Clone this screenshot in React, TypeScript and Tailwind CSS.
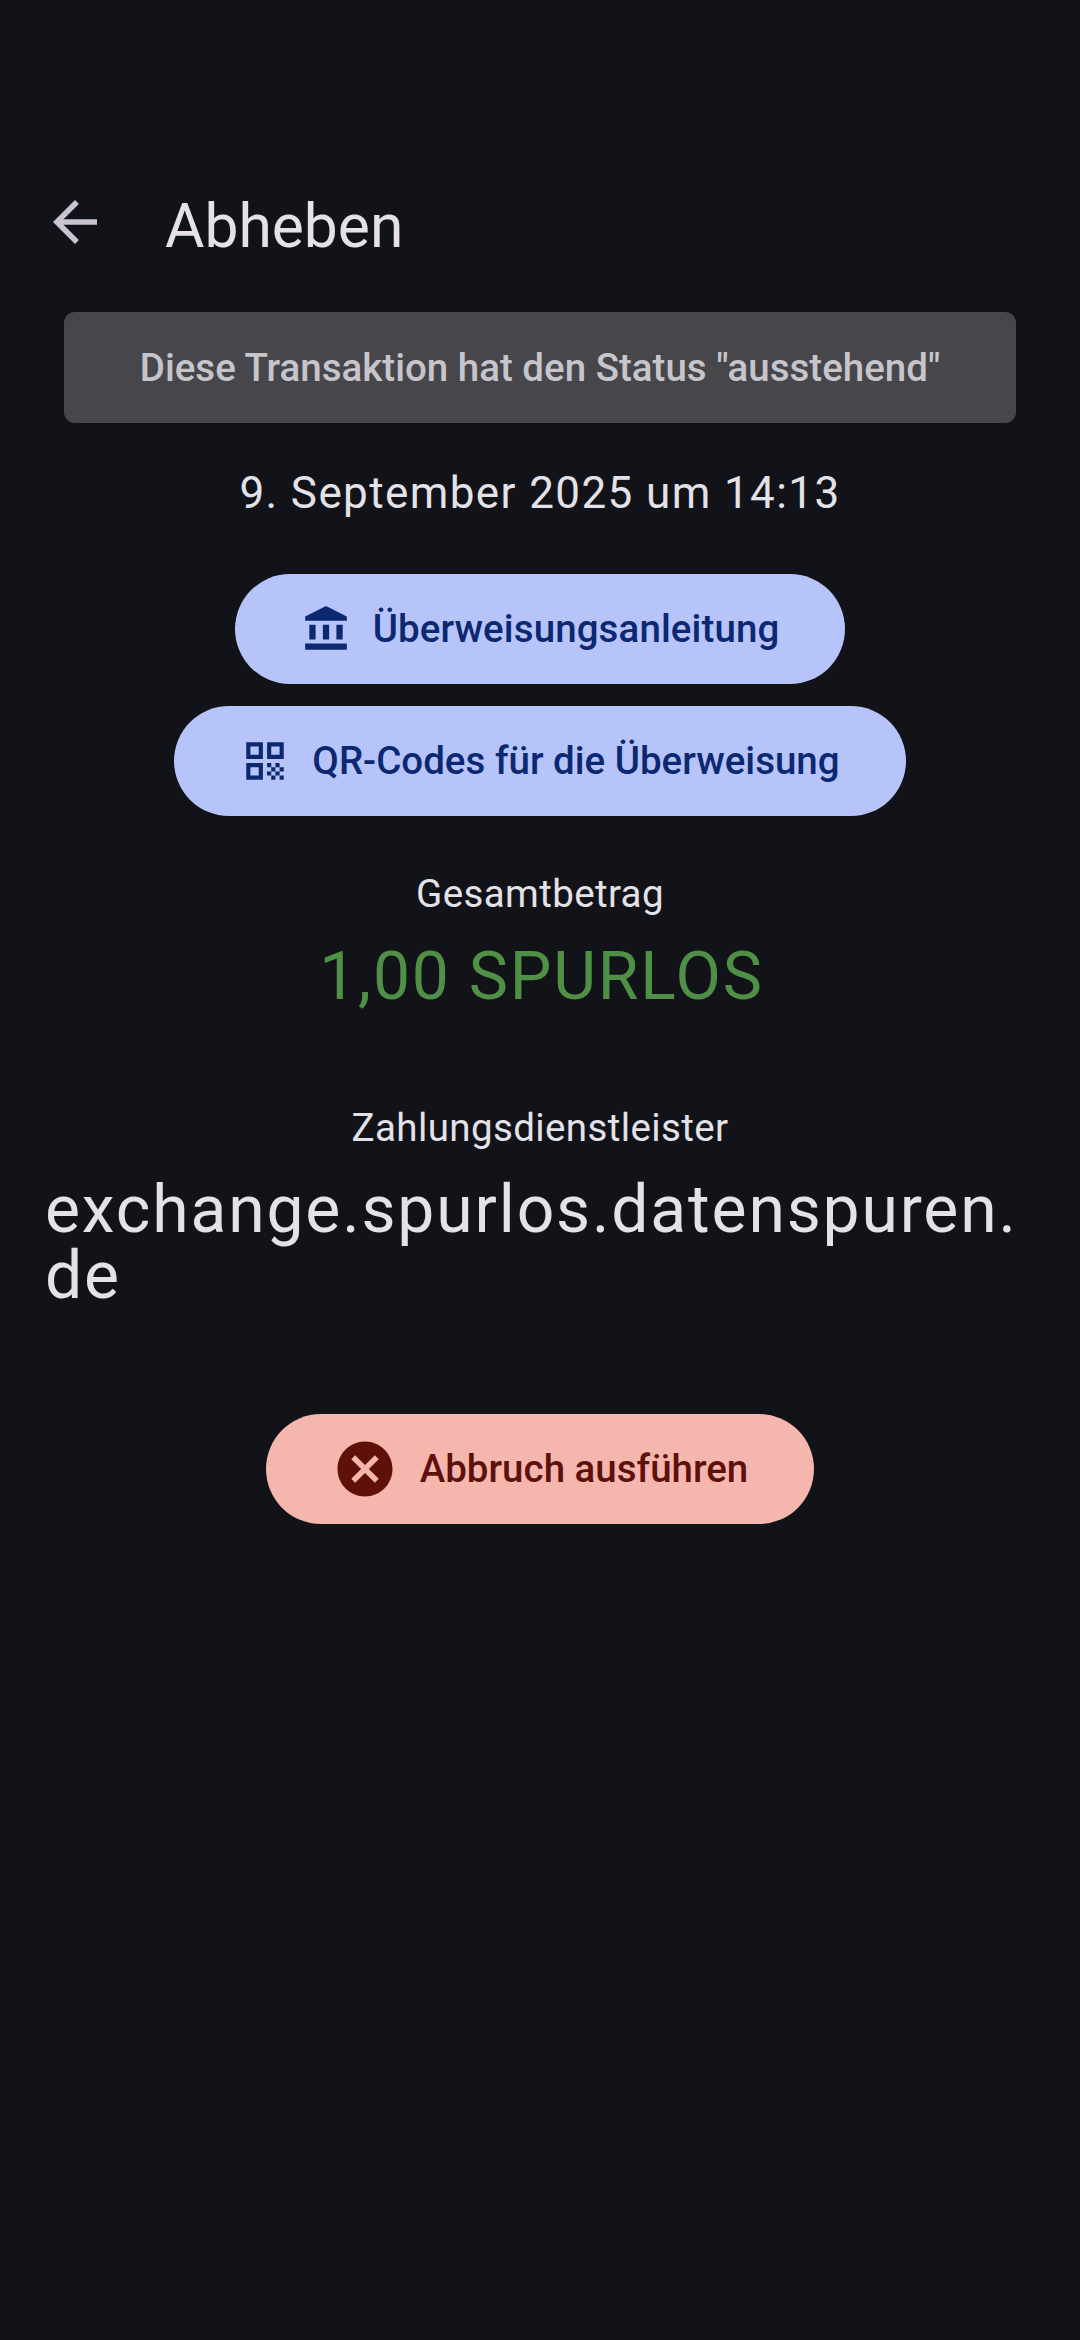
import type { ReactNode } from "react";
import { MdArrowBack, MdCancel, MdQrCode } from "react-icons/md";

function BankIcon({ className }: { className?: string }) {
  return (
    <svg viewBox="0 0 24 24" fill="currentColor" className={className}>
      <path d="M4 10v7h3v-7H4zm6.5 0v7h3v-7h-3zM2 22h20v-3H2v3zm15-12v7h3v-7h-3zM12 1 2 6v2h20V6L12 1z" />
    </svg>
  );
}

function PillButton({ icon, label, className }: { icon: ReactNode; label: string; className: string }) {
  return (
    <button
      type="button"
      className={`flex h-[110px] items-center gap-[22px] rounded-full px-[66px] text-[38.5px] font-medium ${className}`}
    >
      {icon}
      <span className="whitespace-nowrap">{label}</span>
    </button>
  );
}

export default function App() {
  return (
    <div className="flex h-[2340px] w-[1080px] flex-col items-center bg-[#121318] font-[Roboto,sans-serif] text-[#e3e2e9]">
      <header className="mt-[143px] flex h-[169px] w-full items-center px-[42px]">
        <MdArrowBack className="mb-[11px] size-[66px] text-[#cac4d0]" />
        <h1 className="ml-[57px] text-[60.5px] text-[#e6e0e9]">Abheben</h1>
      </header>

      <div className="flex h-[111px] w-[952px] items-center justify-center rounded-[11px] bg-[#47474b] text-[38.5px] font-medium text-[#c6c5cc]">
        Diese Transaktion hat den Status "ausstehend"
      </div>

      <p className="mt-[37px] text-[44px] leading-[66px] tracking-[1.4px]">9. September 2025 um 14:13</p>

      <div className="mt-12 flex flex-col items-center gap-[22px]">
        <PillButton
          icon={<BankIcon className="size-[50px]" />}
          label="Überweisungsanleitung"
          className="bg-[#b7c4fa] tracking-[0.1px] text-[#0b2871]"
        />
        <PillButton
          icon={<MdQrCode className="size-[50px]" />}
          label="QR-Codes für die Überweisung"
          className="bg-[#b7c4fa] text-[#0b2871]"
        />
      </div>

      <p className="mt-[50px] text-[38.5px] leading-[55px] tracking-[0.38px]">Gesamtbetrag</p>
      <p className="mt-[23px] pl-[3px] text-[66px] leading-[66px] tracking-[1.8px] text-[#4f8f46]">1,00 SPURLOS</p>

      <p className="mt-[90px] text-[38.5px] leading-[55px] tracking-[0.38px]">Zahlungsdienstleister</p>
      <div className="mt-[22px] w-full px-[45px] text-[66px] leading-[66px] tracking-[1.85px]">
        <p>exchange.spurlos.datenspuren.</p>
        <p>de</p>
      </div>

      <PillButton
        icon={<MdCancel className="size-[66px]" />}
        label="Abbruch ausführen"
        className="mt-[105px] bg-[#f5b6ae] text-[#5f100b]"
      />
    </div>
  );
}
